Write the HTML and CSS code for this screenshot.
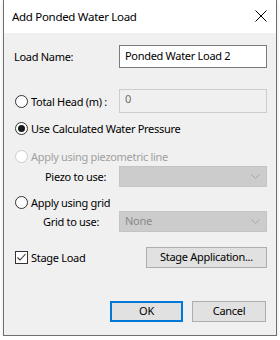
FILE: index.html
```html
<!DOCTYPE html>
<html>
<head>
<meta charset="utf-8">
<link rel="stylesheet" href="styles.css">
</head>
<body>
<div class="window">
  <div class="titlebar">
    <span class="title">Add Ponded Water Load</span>
    <svg class="close" width="12" height="12" viewBox="0 0 12 12"><path d="M0.5 0.5 L11.5 11.5 M11.5 0.5 L0.5 11.5" stroke="#000" stroke-width="1" fill="none"/></svg>
  </div>
  <div class="content">
    <div class="row row-name">
      <span class="label">Load Name:</span>
      <div class="field textbox">Ponded Water Load 2</div>
    </div>
    <div class="row row-head">
      <span class="opt"><span class="radio"></span><span>Total Head (m) :</span></span>
      <div class="field textbox disabled-box">0</div>
    </div>
    <div class="row row-calc">
      <span class="opt"><span class="radio checked"></span><span>Use Calculated Water Pressure</span></span>
    </div>
    <div class="row row-piezo">
      <span class="opt disabled"><span class="radio"></span><span>Apply using piezometric line</span></span>
    </div>
    <div class="row row-piezo-use">
      <span class="sublabel piezo-label">Piezo to use:</span>
      <div class="field combo"><span></span><svg class="chev" width="9" height="5" viewBox="0 0 9 5"><path d="M0.5 0.5 L4.5 4.5 L8.5 0.5" stroke="#a6a6a6" fill="none"/></svg></div>
    </div>
    <div class="row row-grid">
      <span class="opt"><span class="radio"></span><span>Apply using grid</span></span>
    </div>
    <div class="row row-grid-use">
      <span class="sublabel grid-label">Grid to use:</span>
      <div class="field combo"><span>None</span><svg class="chev" width="9" height="5" viewBox="0 0 9 5"><path d="M0.5 0.5 L4.5 4.5 L8.5 0.5" stroke="#a6a6a6" fill="none"/></svg></div>
    </div>
    <div class="row row-stage">
      <span class="opt"><span class="check"><svg width="11" height="11" viewBox="0 0 11 11"><path d="M1.5 5.5 L4 8 L9.5 2" stroke="#333" stroke-width="1.1" fill="none"/></svg></span><span>Stage Load</span></span>
      <button class="btn stage-btn">Stage Application...</button>
    </div>
    <div class="buttons">
      <button class="btn ok">OK</button>
      <button class="btn cancel">Cancel</button>
    </div>
  </div>
</div>
</body>
</html>
```
FILE: styles.css
```css
html, body {
  margin: 0;
  padding: 0;
  background: #ffffff;
}
body {
  font-family: "Noto Sans", "DejaVu Sans", sans-serif;
  font-size: 11px;
  letter-spacing: -0.3px;
  color: #000;
}
.window {
  margin-left: 3px;
  width: 272px;
  height: 335px;
  border: 1px solid #6f6f6f;
  border-top: none;
  background: #f0f0f0;
  display: flex;
  flex-direction: column;
  box-shadow: 0 2px 4px rgba(0,0,0,0.12);
}
.titlebar {
  height: 33px;
  background: #ffffff;
  display: flex;
  align-items: center;
  justify-content: space-between;
  padding: 0 9px 0 8px;
}
.title {
  font-size: 11.5px;
  margin-top: -1px;
}
.close {
  display: block;
  margin-top: -1px;
}
.content {
  flex: 1;
  display: flex;
  flex-direction: column;
  padding: 0 9px 0 10px;
}
.row {
  display: flex;
  align-items: center;
  justify-content: space-between;
}
.field {
  width: 148px;
  box-sizing: border-box;
  display: flex;
  align-items: center;
}
.textbox {
  height: 23px;
  border: 1px solid #7a7a7a;
  background: #fff;
  padding: 0 5px 2px 5px;
}
.disabled-box {
  border-color: #cccccc;
  background: #f0f0f0;
  color: #6d6d6d;
  height: 24px;
  padding-bottom: 6px;
}
.row-name { margin-top: 12px; }
.row-head { margin-top: 21px; }
.row-calc { margin-top: 7px; height: 16px; }
.row-piezo { margin-top: 12px; height: 16px; }
.row-piezo-use { margin-top: 2px; }
.row-grid { margin-top: 7px; height: 16px; }
.row-grid-use { margin-top: 1px; }
.row-stage { margin-top: 15px; }
.opt {
  display: flex;
  align-items: center;
  gap: 3px;
  margin-left: 1px;
}
.opt.disabled { color: #a0a0a0; }
.radio {
  width: 13px;
  height: 13px;
  box-sizing: border-box;
  border: 1px solid #333;
  border-radius: 50%;
  background: #fff;
  position: relative;
}
.radio.checked::after {
  content: "";
  position: absolute;
  left: 2px;
  top: 2px;
  width: 7px;
  height: 7px;
  border-radius: 50%;
  background: #1a1a1a;
}
.opt.disabled .radio { border-color: #cccccc; }
.check {
  width: 13px;
  height: 13px;
  box-sizing: border-box;
  border: 1px solid #333;
  background: #fff;
  display: flex;
  align-items: center;
  justify-content: center;
}
.check svg { display: block; }
.piezo-label { margin-left: 31px; }
.grid-label { margin-left: 29px; }
.combo {
  height: 21px;
  background: #cccccc;
  border: 1px solid #c4c4c4;
  justify-content: space-between;
  padding: 0 5px 2px 5px;
  color: #8a8a8a;
}
.chev { display: block; margin-top: 2px; margin-right: 1px; }
.btn {
  font-family: inherit;
  font-size: 11px;
  letter-spacing: -0.3px;
  background: #e1e1e1;
  border: 1px solid #adadad;
  color: #000;
  height: 21px;
  padding: 0 0 2px 0;
  margin: 0;
  box-sizing: border-box;
}
.stage-btn { width: 121px; }
.buttons {
  display: flex;
  justify-content: flex-end;
  gap: 9px;
  margin-top: 33px;
}
.ok {
  width: 73px;
  border: 2px solid #0078d7;
}
.cancel { width: 74px; margin-right: 1px; }
```
